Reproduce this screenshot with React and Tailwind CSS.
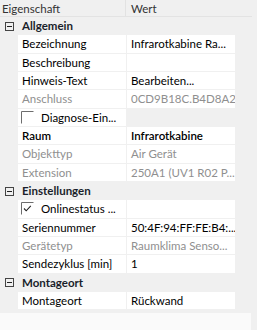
import { useState } from "react";

const groups = [
  {
    title: "Allgemein",
    rows: [
      { name: "Bezeichnung", value: "Infrarotkabine Ra..." },
      { name: "Beschreibung", value: "" },
      { name: "Hinweis-Text", value: "Bearbeiten..." },
      { name: "Anschluss", value: "0CD9B18C.B4D8A2", disabled: true },
      { name: "Diagnose-Ein...", checkbox: true, checked: false, noValue: true },
      { name: "Raum", value: "Infrarotkabine", bold: true },
      { name: "Objekttyp", value: "Air Gerät", disabled: true },
      { name: "Extension", value: "250A1 (UV1 R02 P...", disabled: true },
    ],
  },
  {
    title: "Einstellungen",
    rows: [
      { name: "Onlinestatus ...", checkbox: true, checked: true },
      { name: "Seriennummer", value: "50:4F:94:FF:FE:B4:..." },
      { name: "Gerätetyp", value: "Raumklima Senso...", disabled: true },
      { name: "Sendezyklus [min]", value: "1" },
    ],
  },
  {
    title: "Montageort",
    rows: [{ name: "Montageort", value: "Rückwand" }],
  },
];

// Expander box (minus in a square)
const Expander = () => (
  <svg width="9" height="9" viewBox="0 0 9 9" className="block">
    <rect x="0.5" y="0.5" width="8" height="8" fill="none" stroke="#444" />
    <line x1="2" y1="4.5" x2="7" y2="4.5" stroke="#222" />
  </svg>
);

const CheckBox = ({ checked }) => (
  <svg width="13" height="13" viewBox="0 0 13 13" className="block">
    <path d="M0.5 12.5 V0.5 H12.5" fill="none" stroke="#6d6d6d" />
    {checked && (
      <path d="M3 6.5 L5.2 8.8 L9.8 3.8" fill="none" stroke="#222" strokeWidth="1.1" />
    )}
  </svg>
);

const PropRow = ({ row }) => {
  const tone = row.disabled ? "text-[#8f8f8f]" : "text-black";
  return (
    <div className="flex h-[18.33px] pb-px">
      <div className="w-[18px] shrink-0" />
      <div className={`w-[108px] shrink-0 bg-white flex items-center pl-[4px] overflow-hidden whitespace-nowrap ${tone}`}>
        {row.checkbox ? (
          <div className="flex items-center">
            <div className="-ml-px">
              <CheckBox checked={row.checked} />
            </div>
            <span className="ml-[7px]">{row.name}</span>
          </div>
        ) : (
          <span className={row.bold ? "font-semibold" : ""}>{row.name}</span>
        )}
      </div>
      {!row.noValue && (
        <div className={`ml-px w-[108px] shrink-0 bg-white flex items-center pl-[4px] overflow-hidden whitespace-nowrap ${tone}`}>
          <span className={row.bold ? "font-semibold" : ""}>{row.value}</span>
        </div>
      )}
    </div>
  );
};

export default function App() {
  const [open] = useState(true);
  return (
    <div
      className="w-[257px] h-[330px] bg-[#f0f0f0] text-[11.5px] leading-none overflow-hidden flex flex-col"
      style={{ fontFamily: '"Segoe UI", Lato, sans-serif' }}
    >
      {/* Header */}
      <div className="flex h-[17px] shrink-0 text-[#333]">
        <div className="w-[126px] flex items-center pl-[2px] border-r border-[#e2e2e2]">Eigenschaft</div>
        <div className="flex-1 flex items-center pl-[5px]">Wert</div>
      </div>
      <div className="h-px w-[252px] bg-[#e3e3e3] -mt-px" />

      {/* Rows */}
      <div className="flex flex-col">
        {groups.map((g) => (
          <div key={g.title}>
            <div className="flex h-[18.33px] items-center">
              <div className="w-[18px] shrink-0 flex justify-center">
                <Expander />
              </div>
              <span className="pl-[4px] font-bold text-[#1a1f2b]">{g.title}</span>
            </div>
            {open && g.rows.map((r) => <PropRow key={r.name + g.title} row={r} />)}
          </div>
        ))}
      </div>

      {/* Description area */}
      <div className="flex-1 mt-[3px] w-[251px] bg-[#fafafa]" />
    </div>
  );
}
